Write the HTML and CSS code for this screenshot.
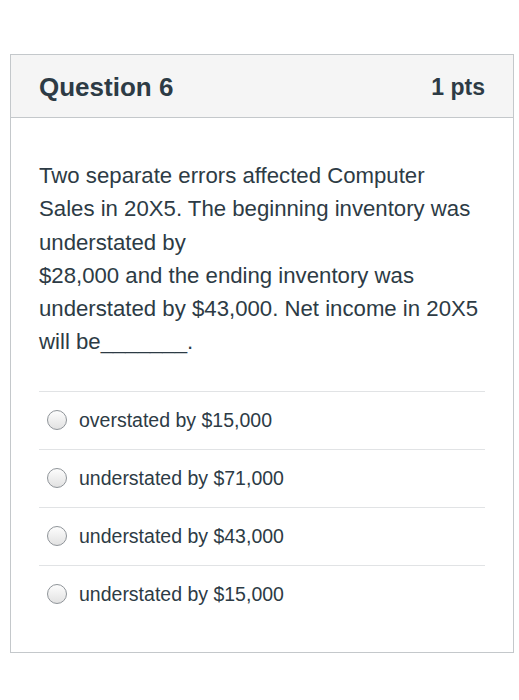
FILE: index.html
```html
<!DOCTYPE html>
<html>
<head>
<meta charset="utf-8">
<link rel="stylesheet" href="styles.css">
</head>
<body>
<div class="card">
  <div class="card-header">
    <span class="q-title">Question 6</span>
    <span class="q-pts">1 pts</span>
  </div>
  <div class="card-body">
    <p class="q-text">Two separate errors affected Computer<br>Sales in 20X5. The beginning inventory was<br>understated by<br>$28,000 and the ending inventory was<br>understated by $43,000. Net income in 20X5<br>will be_______.</p>
    <div class="answers">
      <label class="answer"><span class="radio"></span><span class="a-text">overstated by $15,000</span></label>
      <label class="answer"><span class="radio"></span><span class="a-text">understated by $71,000</span></label>
      <label class="answer"><span class="radio"></span><span class="a-text">understated by $43,000</span></label>
      <label class="answer"><span class="radio"></span><span class="a-text">understated by $15,000</span></label>
    </div>
  </div>
</div>
</body>
</html>
```

FILE: styles.css
```css
html, body {
  margin: 0;
  padding: 0;
  background: #ffffff;
}
body {
  font-family: "Liberation Sans", Arial, Helvetica, sans-serif;
  color: #2d3b45;
}
.card {
  margin: 54px 0 0 10px;
  width: 502px;
  border: 1px solid #c4c8cb;
  background: #fff;
}
.card-header {
  height: 62px;
  display: flex;
  align-items: center;
  justify-content: space-between;
  padding: 0 28px;
  background: #f5f5f5;
  border-bottom: 1px solid #c4c8cb;
  font-weight: bold;
}
.q-title {
  font-size: 26px;
  margin-top: 3px;
}
.q-pts {
  font-size: 23px;
  margin-top: 3px;
}
.card-body {
  padding: 41px 28px 29px 28px;
}
.q-text {
  margin: 0;
  font-size: 22.2px;
  line-height: 33.3px;
  color: #2d3b45;
  white-space: nowrap;
}
.answers {
  margin-top: 32px;
}
.answer {
  display: flex;
  align-items: center;
  height: 58px;
  border-top: 1px solid #e1e3e5;
  padding-left: 8px;
  box-sizing: border-box;
}
.radio {
  width: 20px;
  height: 20px;
  border-radius: 50%;
  border: 1px solid #8f9499;
  background: linear-gradient(#fdfdfd, #e2e2e2);
  box-sizing: border-box;
  margin-right: 12px;
  flex: none;
}
.a-text {
  font-size: 19.5px;
  color: #2d3b45;
}
```
